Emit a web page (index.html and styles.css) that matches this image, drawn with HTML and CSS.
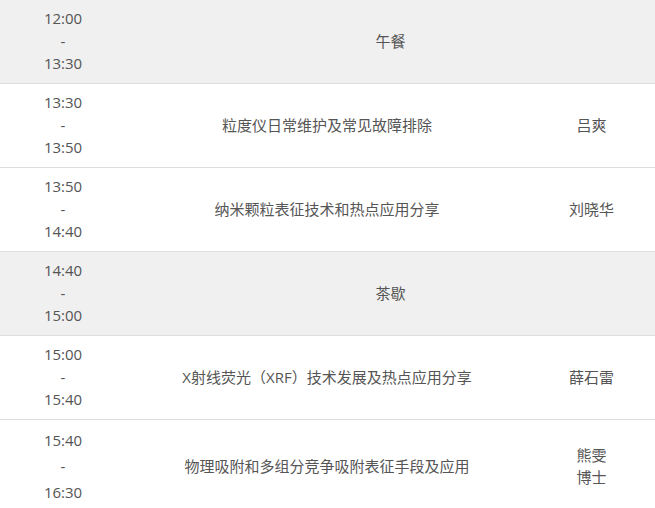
FILE: index.html
```html
<!DOCTYPE html>
<html lang="zh-CN">
<head>
<meta charset="utf-8">
<title>日程</title>
<link rel="stylesheet" href="styles.css">
</head>
<body>
<table class="schedule">
  <colgroup>
    <col class="col-time">
    <col class="col-topic">
    <col class="col-speaker">
  </colgroup>
  <tbody>
    <tr class="row-break">
      <td class="time">12:00<br>-<br>13:30</td>
      <td class="merged" colspan="2">午餐</td>
    </tr>
    <tr>
      <td class="time">13:30<br>-<br>13:50</td>
      <td class="topic">粒度仪日常维护及常见故障排除</td>
      <td class="speaker">吕爽</td>
    </tr>
    <tr>
      <td class="time">13:50<br>-<br>14:40</td>
      <td class="topic">纳米颗粒表征技术和热点应用分享</td>
      <td class="speaker">刘晓华</td>
    </tr>
    <tr class="row-break">
      <td class="time">14:40<br>-<br>15:00</td>
      <td class="merged" colspan="2">茶歇</td>
    </tr>
    <tr>
      <td class="time">15:00<br>-<br>15:40</td>
      <td class="topic">X射线荧光（XRF）技术发展及热点应用分享</td>
      <td class="speaker">薛石雷</td>
    </tr>
    <tr>
      <td class="time time-loose">15:40<br>-<br>16:30</td>
      <td class="topic">物理吸附和多组分竞争吸附表征手段及应用</td>
      <td class="speaker">熊雯<br>博士</td>
    </tr>
  </tbody>
</table>
</body>
</html>
```

FILE: styles.css
```css
html, body {
  margin: 0;
  padding: 0;
  background: #ffffff;
}

body {
  font-family: "Open Sans", "Noto Sans CJK SC", sans-serif;
  font-size: 15px;
  line-height: 1.5;
  color: #555555;
}

.schedule {
  width: 655px;
  border-collapse: collapse;
  table-layout: fixed;
}

.col-time { width: 126px; }
.col-topic { width: 402px; }
.col-speaker { width: 127px; }

.schedule td {
  padding: 7px 0 8.5px;
  text-align: center;
  vertical-align: middle;
  border-bottom: 1px solid #dddddd;
}

.row-break td {
  background: #f0f0f0;
}

.merged {
  padding-left: 5px;
}

.topic {
  padding-left: 2px;
}

.time-loose {
  line-height: 26px;
}
```
